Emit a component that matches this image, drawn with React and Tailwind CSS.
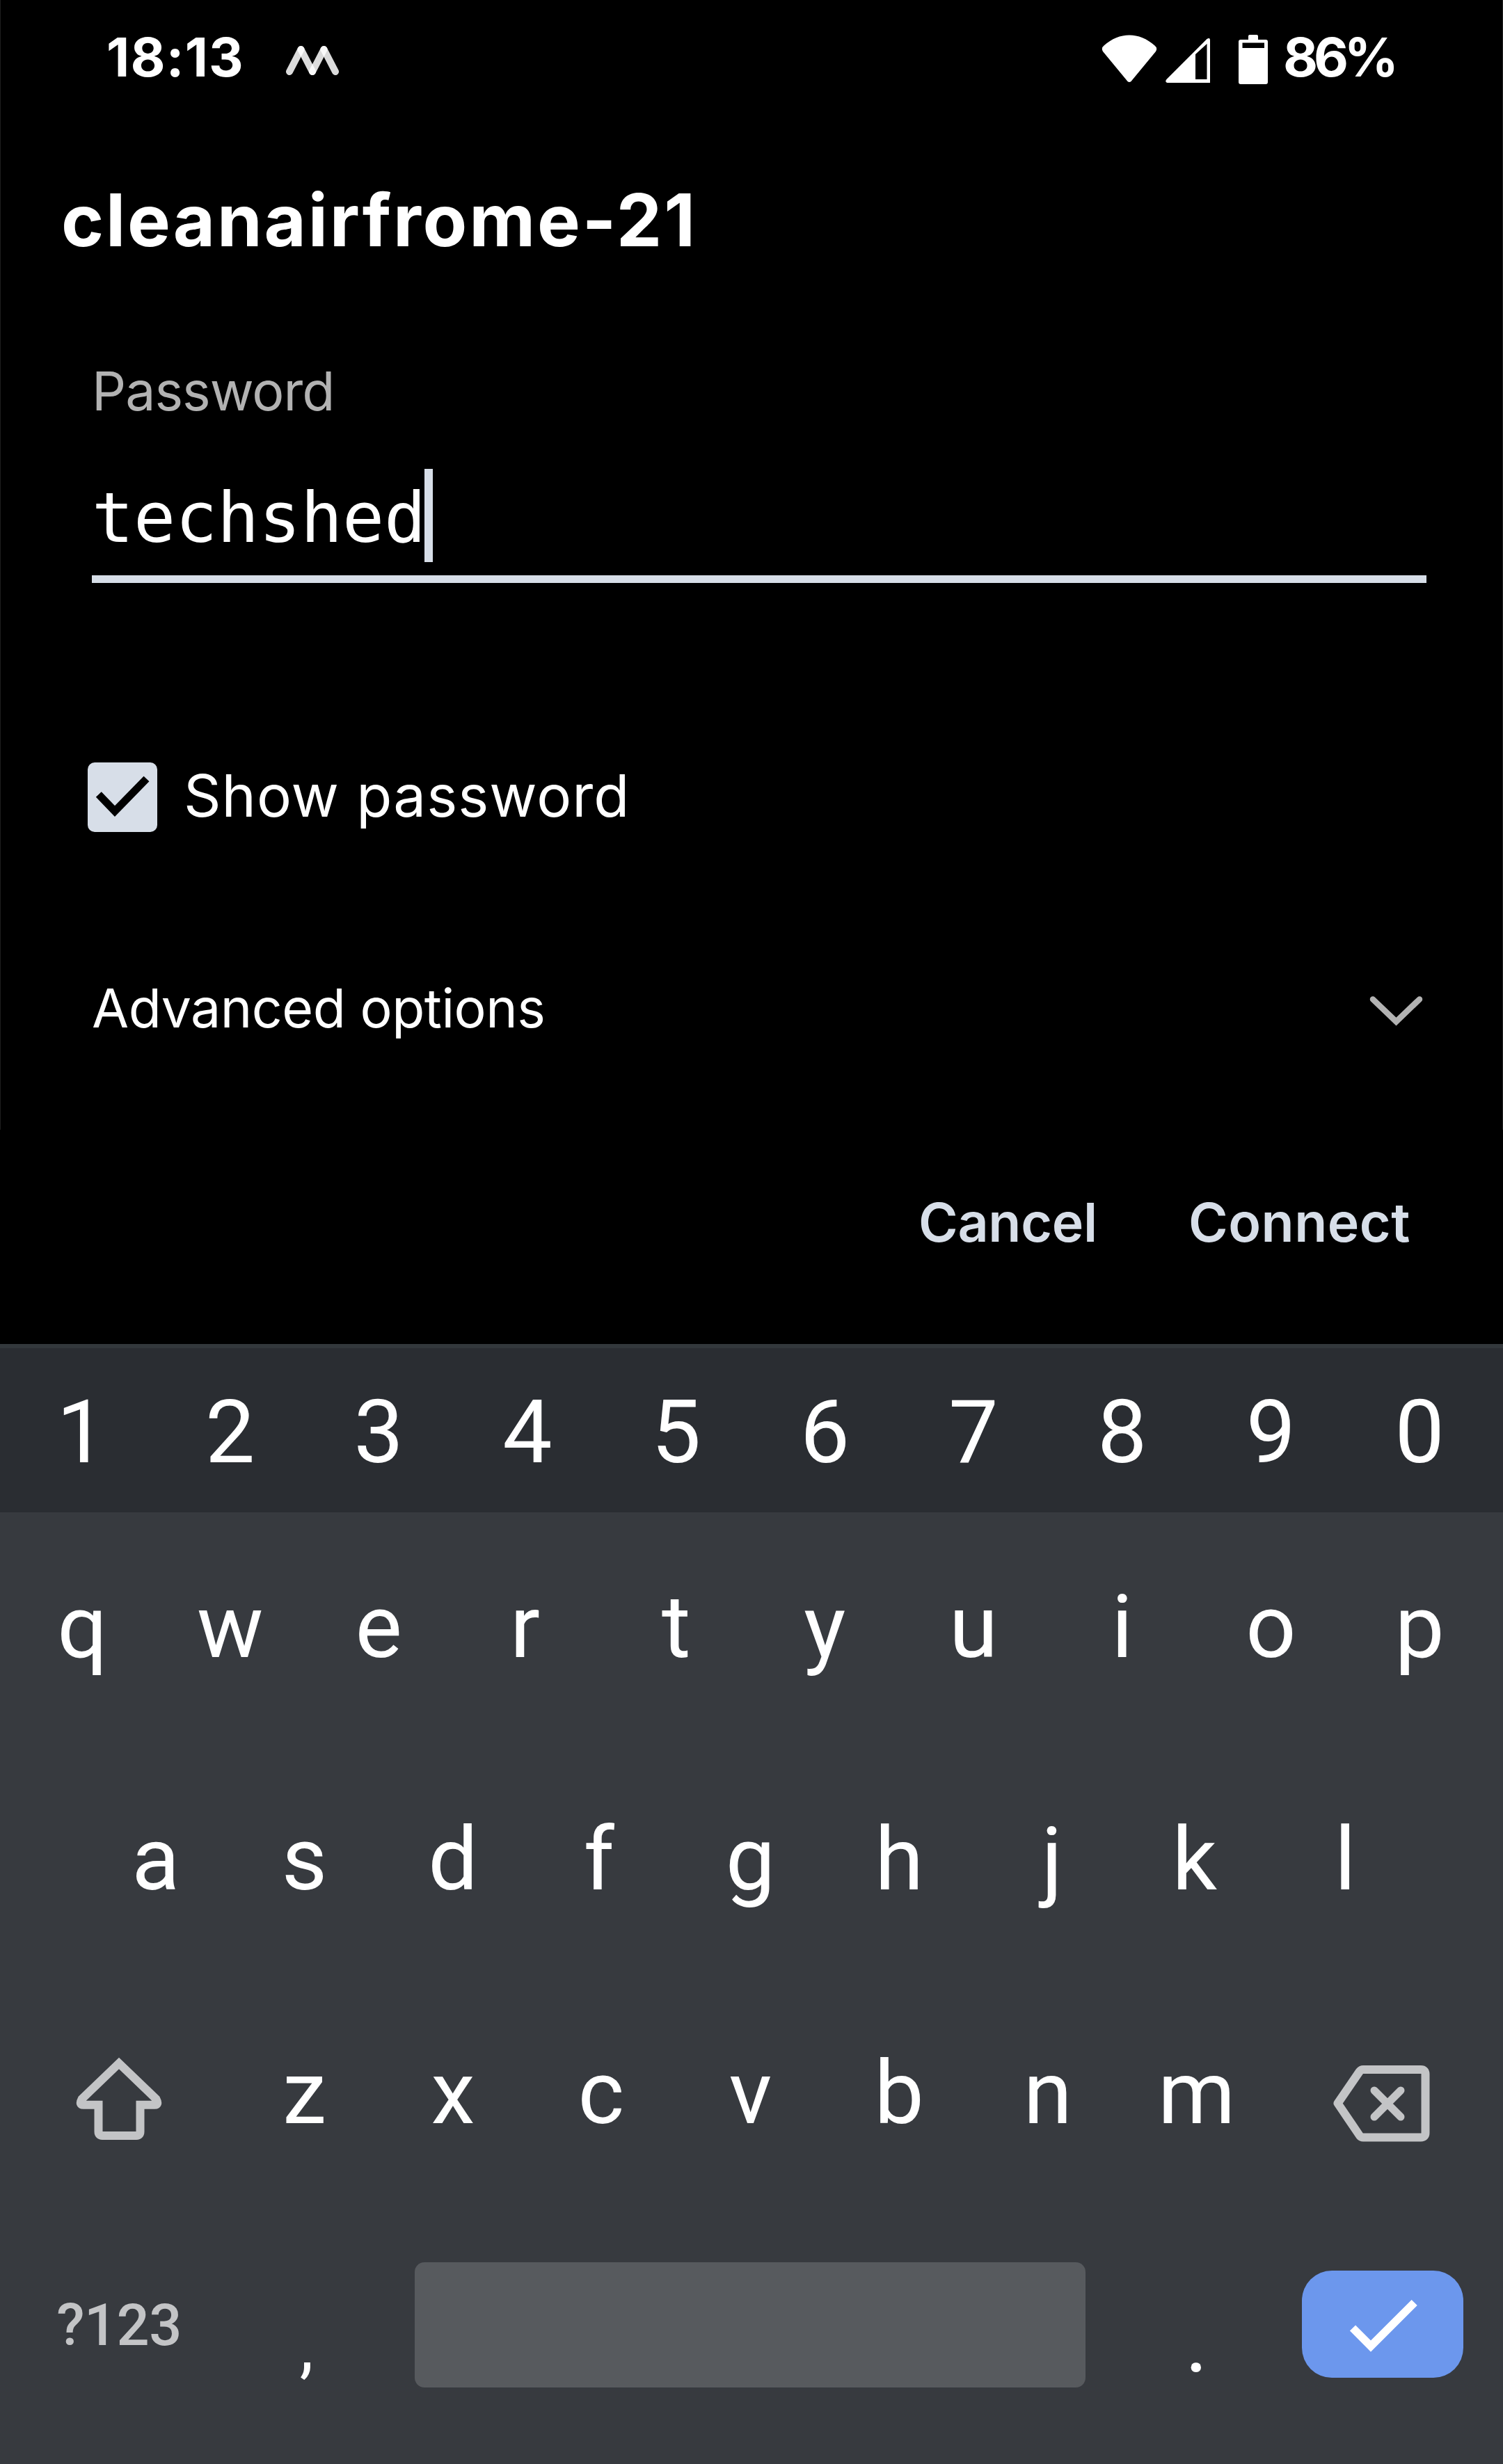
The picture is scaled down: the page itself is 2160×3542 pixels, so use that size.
import React from "react";

const INTER = "font-['Inter',sans-serif]";
const ROBOTO = "font-['Roboto',sans-serif]";

function StatusBar() {
  return (
    <header className={`${INTER} flex h-[160px] items-start justify-between pl-[153px] pr-[154px] pt-[44px] text-[77px] font-bold leading-none text-white`}>
      <div className="flex items-start">
        <span className="w-[257px] whitespace-nowrap tracking-[1.2px]">18:13</span>
        <svg className="mt-[21px] h-[43px] w-[78px]" viewBox="410 65 78 43" fill="none" stroke="white" strokeOpacity="0.86" strokeWidth="10" strokeLinecap="round">
          <path d="M416 103 L432.5 71" />
          <path d="M432.5 71 L449 103" />
          <path d="M449 103 L465.5 71" />
          <path d="M465.5 71 L482 103" />
        </svg>
      </div>
      <div className="flex items-start">
        <svg className="mt-[4px] h-[76px] w-[244px]" viewBox="1582 48 244 76" fill="white">
          <path d="M1620.500 117 L1585 74 Q1582 69 1586.500 65.500 C1609 45.500 1637 45.500 1659.500 65.500 Q1664 69 1661 74 L1625.500 117 Q1623 119 1620.500 117Z" />
          <path fillRule="evenodd" d="M1734.500 56 Q1739 53 1739 58 V119 H1677.500 Q1673.500 117.500 1676.500 114Z M1718 78 V114 H1734.500 V63Z" />
          <path fillRule="evenodd" d="M1794 57 V52 Q1794 50 1796 50 H1806 Q1808 50 1808 52 V57 H1819 Q1822 57 1822 60 V118 Q1822 121 1819 121 H1783 Q1780 121 1780 118 V60 Q1780 57 1783 57Z M1785.500 61.500 V69 H1817 V61.500Z" />
        </svg>
        <span className="ml-[18px] w-[162px] whitespace-nowrap tracking-[-6.200px]">86%</span>
      </div>
    </header>
  );
}

function WifiDialog() {
  return (
    <main className={`${INTER} flex h-[1772px] flex-col text-white`}>
      <h1 className="ml-[88px] mt-[104px] whitespace-nowrap text-[104px] font-bold leading-none tracking-[2.8px]">cleanairfrome-21</h1>
      <label className="ml-[132px] mt-[156px] text-[77px] leading-none tracking-[-1px] text-[#b2b2b2]">Password</label>
      <div className="ml-[132px] mr-[110px] mt-[73px] flex h-[164px] items-start border-b-[11px] border-[#d7dee8]">
        <span className="mt-[21px] w-[478px] whitespace-nowrap font-['DejaVu_Sans_Mono',monospace] text-[100px] leading-none tracking-[-0.2px]">techshed</span>
        <span className="h-[134px] w-[12px] bg-[#d7dee8]" />
      </div>
      <div className="ml-[126px] mt-[258px] flex h-[100px] items-start">
        <svg className="h-[100px] w-[100px] rounded-[10px] bg-[#d7dee8]" viewBox="126 1096 100 100" fill="none" stroke="black" strokeWidth="11">
          <path d="M141.800 1142 L165 1166 L210.500 1119.500" />
        </svg>
        <span className="ml-[38px] mt-[6px] whitespace-nowrap text-[83.500px] leading-none tracking-[1px]">Show password</span>
      </div>
      <div className="ml-[132px] mr-[110px] mt-[215px] flex items-start justify-between">
        <span className="whitespace-nowrap text-[77px] leading-none tracking-[-0.5px]">Advanced options</span>
        <svg className="mt-[17px] h-[50px] w-[88px]" viewBox="1962 1428 88 50" fill="none" stroke="#b2b2b2" strokeWidth="8.500" strokeLinecap="round">
          <path d="M1973 1436.500 L2006.500 1468.500 L2040 1436.500" />
        </svg>
      </div>
      <div className="mr-[132px] mt-[231px] flex justify-end text-[77px] font-semibold leading-none text-[#d7dee8]">
        <span className="w-[388px] whitespace-nowrap tracking-[-0.3px]">Cancel</span>
        <span className="w-[320px] whitespace-nowrap tracking-[0.5px]">Connect</span>
      </div>
    </main>
  );
}

// Optical centring for glyphs with uneven side bearings.
const NUDGE = { q: "pl-[3px]", r: "pr-[7px]", f: "pr-[8px]", j: "pl-[12px]", k: "pr-[6px]", c: "pr-[2px]" };

function Key({ label }) {
  return <span className={`w-[213.7px] text-center ${NUDGE[label] || ""}`}>{label}</span>;
}

function Keyboard() {
  return (
    <section className={`${ROBOTO} h-[1610px] border-t-[6px] border-[#33383c] bg-[#373a3f] text-[127px] leading-none text-white`}>
      <div className="flex h-[236px] justify-center bg-[#2a2d32] pr-[3px] pt-[57px]">
        {[..."1234567890"].map((k) => <Key key={k} label={k} />)}
      </div>
      <div className="flex h-[329px] items-center justify-center pr-[3px]">
        {[..."qwertyuiop"].map((k) => <Key key={k} label={k} />)}
      </div>
      <div className="flex h-[339px] items-center justify-center pr-[3px]">
        {[..."asdfghjkl"].map((k) => <Key key={k} label={k} />)}
      </div>
      <div className="flex h-[333px] items-center justify-center pr-[3px]">
        <span className="flex w-[321px] justify-center">
          <svg className="ml-[2px] mt-[16px] h-[124px] w-[130px]" viewBox="106 2954 130 124" fill="none" stroke="#c3c4c6" strokeWidth="12">
            <path d="M171 2965 L117.500 3016.500 Q113 3024.800 120 3024.800 H141.500 V3063 Q141.500 3069 147 3069 H196 Q201.500 3069 201.500 3063 V3024.800 H222 Q229 3024.800 224.500 3016.500 Z" />
          </svg>
        </span>
        {[..."zxcvbnm"].map((k) => <Key key={k} label={k} />)}
        <span className="flex w-[321px] justify-center">
          <svg className="mr-[4px] mt-[28px] h-[116px] w-[144px]" viewBox="1913 2964 144 116" fill="none" stroke="#c3c4c6" strokeWidth="12" strokeLinejoin="round">
            <path d="M1922.500 3022.500 L1954 2976.500 Q1956 2974 1959 2974 H2042 Q2048.500 2974 2048.500 2980.500 V3065 Q2048.500 3071.500 2042 3071.500 H1959 Q1956 3071.500 1954 3069Z" />
            <path strokeWidth="11" strokeLinecap="round" d="M1975 3004 L2013 3042 M2013 3004 L1975 3042" />
          </svg>
        </span>
      </div>
      <div className="flex h-[334px] items-center justify-center pr-[2px]">
        <span className="w-[321px] text-center text-[83px] font-medium tracking-[-0.6px] text-[#c3c4c6]">?123</span>
        <span className="w-[214px] pl-[4px] pt-[62px] text-center text-[100px]">,</span>
        <span className="ml-[50px] mr-[52px] h-[180px] w-[964px] rounded-[14px] bg-[#575a5e]" />
        <span className="w-[214px] pl-[2px] pt-[47px] text-center">.</span>
        <span className="flex w-[322px] justify-center">
          <svg className="mb-[2px] h-[154px] w-[232px] rounded-[43px] bg-[#6c97ed]" viewBox="1870 3264 232 154" fill="none" stroke="white" strokeWidth="11.500">
            <path d="M1943 3346.500 L1969 3372.500 L2031.700 3310" />
          </svg>
        </span>
      </div>
    </section>
  );
}

export default function App() {
  return (
    <div className="relative h-[3542px] w-[2160px] overflow-hidden bg-black">
      <StatusBar />
      <WifiDialog />
      <Keyboard />
      <div className="pointer-events-none absolute inset-x-0 top-0 h-[1624px] border-x border-[#1e1e1e]" />
    </div>
  );
}
